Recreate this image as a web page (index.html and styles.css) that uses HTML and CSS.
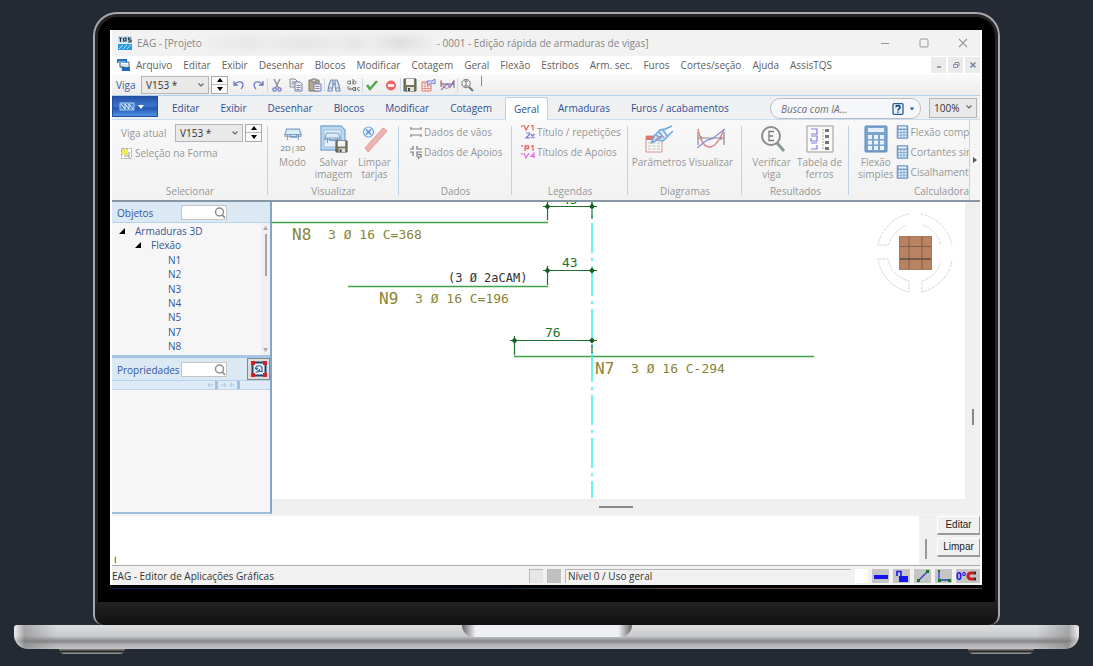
FILE: index.html
```html
<!DOCTYPE html>
<html lang="pt-BR">
<head>
<meta charset="utf-8">
<title>EAG - Edição rápida de armaduras de vigas</title>
<link rel="stylesheet" href="styles.css">
</head>
<body>
<svg class="defs" width="0" height="0" aria-hidden="true">
  <defs>
    <symbol id="chev" viewBox="0 0 8 8"><path d="M1.5 2.5 4 5 6.500 2.500" fill="none" stroke="#666" stroke-width="1.100"/></symbol>
    <symbol id="lens" viewBox="0 0 12 12"><circle cx="5.500" cy="5" r="4" fill="none" stroke="#8d8d8d" stroke-width="1.500"/><path d="M8.300 8 11 11" stroke="#8d8d8d" stroke-width="1.800"/></symbol>
    <symbol id="calc" viewBox="0 0 24 28"><rect x="1" y="1" width="22" height="26" rx="1" fill="#7ba3ce" stroke="#5b87ba"/><rect x="4" y="3" width="16" height="4" fill="#e4eefa"/><path d="M4 10h4v4H4zm6 0h4v4h-4zm6 0h4v4h-4zM4 15.500h4v4H4zm6 0h4v4h-4zm6 0h4v4h-4zM4 21h4v4H4zm6 0h4v4h-4zm6 0h4v4h-4z" fill="#e9f1fa"/></symbol>
    <symbol id="beam" viewBox="0 0 20 14"><path d="M3 1h14l2 6H1zM4 7v6M16 7v6M7 7v3h7V7M1 7h18v2H1z" fill="#dcebf8" stroke="#7c9ec4" stroke-width="1.200"/></symbol>
    <symbol id="disk" viewBox="0 0 14 14"><path d="M1 1h12v12H1z" fill="#77785f" stroke="#55564a"/><path d="M3 1h8v6H3z" fill="#f3f3f3"/><path d="M4 9h7v4H4z" fill="#ddd"/><path d="M5 10h2v3H5z" fill="#444"/></symbol>
  </defs>
</svg>
<div class="laptop">
  <div class="lid">
    <main class="screen">
      <header class="title">
        <svg class="logo" width="14" height="14" viewBox="0 0 14 14"><rect width="14" height="7" fill="#c7e3f2"/><path d="M1 2h3M2.500 2v4M6 2h2v3H5.500V2M13 2h-2.500v2H13v2h-3" fill="none" stroke="#23323e" stroke-width="1.200"/><rect y="8" width="14" height="6" fill="#2e9be6"/><path d="m1 13 4-4m0 4 4-4m0 4 4-4" stroke="#a7dcff"/></svg>
        <span>EAG - [Projeto</span><span class="smudge"></span><span>- 0001 - Edição rápida de armaduras de vigas]</span>
        <div class="winbtns">
          <button aria-label="Minimizar"><svg width="10" height="10"><path d="M1 5.500h8" stroke="#999"/></svg></button>
          <button aria-label="Maximizar"><svg width="10" height="10"><rect x="1" y="1" width="8" height="8" rx="1" fill="none" stroke="#999"/></svg></button>
          <button aria-label="Fechar"><svg width="10" height="10"><path d="m1 1 8 8m0-8-8 8" stroke="#999" stroke-width="1.100"/></svg></button>
        </div>
      </header>
      <nav class="menu">
        <svg class="logo" width="14" height="13" viewBox="0 0 14 13"><path d="M0 0h10v4H0z" fill="#2674bd"/><path d="M1 3h8" stroke="#b7def7"/><path d="M4 5h6l2 2v5H4z" fill="#d9e2ea"/><path d="M5 8h8v4H5z" fill="#1f6cb4"/><path d="M3 4v4h4" fill="none" stroke="#33506a"/><path d="M10 3h2v5" fill="none" stroke="#666"/></svg>
        <a href="#">Arquivo</a><a href="#">Editar</a><a href="#">Exibir</a><a href="#">Desenhar</a><a href="#">Blocos</a><a href="#">Modificar</a><a href="#">Cotagem</a><a href="#">Geral</a><a href="#">Flexão</a><a href="#">Estribos</a><a href="#">Arm. sec.</a><a href="#">Furos</a><a href="#">Cortes/seção</a><a href="#">Ajuda</a><a href="#">AssisTQS</a>
        <div class="mdi">
          <button aria-label="Minimizar desenho"><svg width="8" height="8"><path d="M2 6h4" stroke="#76879b" stroke-width="1.500"/></svg></button>
          <button aria-label="Restaurar desenho"><svg width="8" height="8"><path d="M1.500 3.500h4v3h-4zM3 3V1.500h4v3.500H6" fill="none" stroke="#8292a5"/></svg></button>
          <button aria-label="Fechar desenho"><svg width="8" height="8"><path d="m1.500 1.500 5 5m0-5-5 5" stroke="#76879b" stroke-width="1.600"/></svg></button>
        </div>
      </nav>
      <div class="tools">
        <label for="viga">Viga</label>
        <span class="combo"><select id="viga"><option>V153 *</option></select><svg width="8" height="8"><use href="#chev"/></svg></span>
        <span class="spin"><button aria-label="Próxima viga"><svg width="6" height="4"><path d="M0 4 3 0l3 4z"/></svg></button><button aria-label="Viga anterior"><svg width="6" height="4"><path d="m0 0 3 4 3-4z"/></svg></button></span>
        <div class="icons">
          <button aria-label="Desfazer"><svg width="14" height="14" viewBox="0 0 14 14"><path d="M2 3v4h4M2.500 6.500C5 3 11 3 11 7c0 2-1 3-2 4" fill="none" stroke="#6a79c4" stroke-width="1.300"/></svg></button>
          <button aria-label="Refazer"><svg width="14" height="14" viewBox="0 0 14 14"><path d="M12 3v4H8m3.500-.500C9 3 3 3 3 7c0 2 1 3 2 4" fill="none" stroke="#6a79c4" stroke-width="1.300"/></svg></button>
          <i></i>
          <button aria-label="Recortar"><svg width="14" height="14" viewBox="0 0 14 14"><path d="m4 1 4.500 9M10 1 5.500 10" stroke="#8a8f98" stroke-width="1.400"/><circle cx="4.500" cy="11.500" r="1.700" fill="none" stroke="#6b79c6" stroke-width="1.200"/><circle cx="9.500" cy="11.500" r="1.700" fill="none" stroke="#6b79c6" stroke-width="1.200"/></svg></button>
          <button aria-label="Copiar"><svg width="14" height="14" viewBox="0 0 14 14"><path d="M1 1h5l2 2v6H1z" fill="#eee" stroke="#8c8c98"/><path d="M6 4h5l2 2v7H6z" fill="#eef" stroke="#777fb4"/><path d="M2.500 4h4M2.500 6h3M7.500 7.500h4m-4 2h4m-4 2h3" stroke="#888"/></svg></button>
          <button aria-label="Colar"><svg width="14" height="14" viewBox="0 0 14 14"><path d="M1 2h10v11H1z" fill="#b1ab8b" stroke="#777768"/><path d="M4 1h4v3H4z" fill="#ddd" stroke="#777"/><path d="M6 6h7v7H6z" fill="#eef" stroke="#757cb6"/><path d="M7.500 8.500h4m-4 2h4" stroke="#888"/></svg></button>
          <i></i>
          <button aria-label="Localizar"><svg width="14" height="14" viewBox="0 0 14 14"><path d="M4 2h2v5l-1 6H1l1-6zM8 2h2l2 5 1 6H9L8 7zM5 6h4" fill="#dfeaf5" stroke="#7790b5" stroke-width="1.200"/><path d="M1 10h4m4 0h4" stroke="#7790b5"/></svg></button>
          <button aria-label="Substituir"><svg width="14" height="14" viewBox="0 0 14 14"><circle cx="3" cy="4.500" r="1.500" fill="none" stroke="#777"/><path d="M4.500 2.500v4M7 1v5.500" stroke="#777"/><circle cx="8.500" cy="4.500" r="1.500" fill="none" stroke="#777"/><path d="M2 8v3h3M4 9.500 5.500 11 4 12.500" fill="none" stroke="#777"/><circle cx="8" cy="11" r="1.500" fill="none" stroke="#666"/><path d="M9.500 9v4M13.500 9.700a1.500 1.500 0 1 0 0 2.600" fill="none" stroke="#666"/></svg></button>
          <i></i>
          <button aria-label="Confirmar"><svg width="14" height="14" viewBox="0 0 14 14"><path d="m2 7 3 4 7-8" fill="none" stroke="#52aa4c" stroke-width="2.600"/></svg></button>
          <button aria-label="Cancelar"><svg width="14" height="14" viewBox="0 0 14 14"><circle cx="7" cy="7.500" r="5" fill="#e8686a"/><path d="M4 7.500h6" stroke="#fff" stroke-width="2.400"/></svg></button>
          <i></i>
          <button aria-label="Salvar"><svg width="14" height="14"><use href="#disk"/></svg></button>
          <button aria-label="Parâmetros"><svg width="15" height="14" viewBox="0 0 15 14"><path d="M1 4h9v9H1z" fill="#fff" stroke="#db7773"/><path d="M1 5h9M1 8h9M1 10.500h9M4 5v8M7 5v8" stroke="#e5938f"/><path d="M6 3h5l3-2v5l-3-1-4 2z" fill="#dfe2fb" stroke="#777ac4"/></svg></button>
          <button aria-label="Diagrama"><svg width="15" height="14" viewBox="0 0 15 14"><path d="M1 6h13M1 3v6M14 3v7" stroke="#666"/><path d="M1 2c2 10 8 12 13 0" fill="none" stroke="#e77676" stroke-width="1.200"/><path d="m1 12 6-6 3 3 4-6" fill="none" stroke="#777dd0" stroke-width="1.200"/></svg></button>
          <i></i>
          <button aria-label="Ampliar"><svg width="14" height="14" viewBox="0 0 14 14"><circle cx="6" cy="5.500" r="4.200" fill="#f4f4f4" stroke="#777"/><path d="M6 3v5M4 3h4M4 8h4" stroke="#777"/><path d="m9 9 4 4" stroke="#667878" stroke-width="2"/></svg></button>
          <b></b>
        </div>
      </div>
      <nav class="tabs">
        <button class="app" aria-label="Aplicação"><svg width="38" height="10" viewBox="0 0 38 10"><path d="M4 1h14v7H4z" fill="#4c86cd" stroke="#b7d5f5"/><path d="m5 2 4 5V2l4 5V2l4 5" stroke="#e5f2ff" fill="none"/><path d="M22 3h6l-3 4z" fill="#fff"/></svg></button>
        <button>Editar</button><button>Exibir</button><button>Desenhar</button><button>Blocos</button><button>Modificar</button><button>Cotagem</button><button class="on">Geral</button><button>Armaduras</button><button>Furos / acabamentos</button>
        <div class="ask">
          <input type="text" aria-label="Busca" placeholder="Busca com IA...">
          <button aria-label="Ajuda"><svg width="26" height="12" viewBox="0 0 26 12"><rect x="1" y=".700" width="10" height="10.600" rx="1" fill="#e9f2fc" stroke="#2b5b98" stroke-width="1.300"/><path d="M4 4.300c0-2.200 4-2.200 4 0C8 6 6 5.700 6 7.500M6 8.500v1.300" fill="none" stroke="#184379" stroke-width="1.600"/><path d="M18 4.500h4l-2 3z" fill="#174ca0"/></svg></button>
        </div>
        <span class="combo zoom"><select aria-label="Zoom"><option>100%</option></select><svg width="8" height="8"><use href="#chev"/></svg></span>
      </nav>
      <section class="ribbon">
        <div class="group sel">
          <div class="body">
            <div class="line"><label for="atual">Viga atual</label>
              <span class="combo"><select id="atual"><option>V153 *</option></select><svg width="8" height="8"><use href="#chev"/></svg></span>
              <span class="spin"><button aria-label="Próxima"><svg width="6" height="4"><path d="M0 4 3 0l3 4z"/></svg></button><button aria-label="Anterior"><svg width="6" height="4"><path d="m0 0 3 4 3-4z"/></svg></button></span>
            </div>
            <button class="row"><svg width="11" height="11" viewBox="0 0 11 11"><path d="M.500.500h10v10H.500z" fill="#fff" stroke="#aaa" stroke-dasharray="3 1"/><path d="M1 1h6v6H1z" fill="#ece95e"/><path d="M8 4v6M3 8h5" stroke="#999"/></svg><span>Seleção na Forma</span></button>
          </div>
          <h2>Selecionar</h2>
        </div>
        <div class="group vis">
          <div class="body bigs">
            <button><svg width="28" height="28" viewBox="0 0 28 28"><use href="#beam" x="5" y="3" width="18" height="13"/><text x="14" y="26" class="mode">2D|3D</text></svg><span>Modo</span></button>
            <button><svg width="28" height="28" viewBox="0 0 28 28"><path d="M1 1h20l4 4v20H1z" fill="#bcd9ef" stroke="#7fadd5" stroke-width="1.400"/><path d="M4 5h17v17H4z" fill="#e7f2fb" stroke="#94bbdc"/><use href="#beam" x="4" y="7" width="17" height="12"/><use href="#disk" x="15" y="15" width="13" height="13"/></svg><span>Salvar<br>imagem</span></button>
            <button><svg width="28" height="28" viewBox="0 0 28 28"><path d="m4 23 18-20 4 3L7 27z" fill="#eab5b3" stroke="#e29a98"/><circle cx="7.500" cy="7" r="5" fill="#e5f2ff" stroke="#7ca9dc" stroke-width="1.200"/><path d="m5 4.500 5 5m0-5-5 5" stroke="#5c91cf" stroke-width="1.500"/></svg><span>Limpar<br>tarjas</span></button>
          </div>
          <h2>Visualizar</h2>
        </div>
        <div class="group dad">
          <div class="body">
            <button class="row"><svg width="14" height="12" viewBox="0 0 14 12"><path d="M1 3h12M1 9h12M2 1v2M12 1v2M2 9v2m10-2v2" stroke="#868686" stroke-width="1.200"/></svg><span>Dados de vãos</span></button>
            <button class="row"><svg width="14" height="14" viewBox="0 0 14 14"><path d="M1 4h3V1M8 1v3h5M1 7h3v4M8 12V7h5M9 9.500h3V12H9.500v2" fill="none" stroke="#777" stroke-width="1.200"/></svg><span>Dados de Apoios</span></button>
          </div>
          <h2>Dados</h2>
        </div>
        <div class="group leg">
          <div class="body">
            <button class="row"><svg width="14" height="14" viewBox="0 0 14 14"><path d="M1 0v2m2-2 2 5 3-5m2 1 2-1v5.500" fill="none" stroke="#e36a6a" stroke-width="1.300"/><path d="M5 8h3.500v1.500L5 13h4m1-4 3.500 4m0-4L10 13" fill="none" stroke="#7676db" stroke-width="1.200"/></svg><span>Título / repetições</span></button>
            <button class="row"><svg width="14" height="14" viewBox="0 0 14 14"><path d="M1 0v2m3 4V1h3.500v2.500H4m6-2 2-1V6" fill="none" stroke="#e36a6a" stroke-width="1.300"/><path d="M1 8v2m2-2 2 5 3-5m5 5V8l-3 3.500h4" fill="none" stroke="#e06be6" stroke-width="1.200"/></svg><span>Títulos de Apoios</span></button>
          </div>
          <h2>Legendas</h2>
        </div>
        <div class="group dia">
          <div class="body bigs">
            <button><svg width="28" height="28" viewBox="0 0 28 28"><path d="M1 11h16v16H1z" fill="#f7f7f7" stroke="#d19390"/><path d="M1 11h16v4H1z" fill="#dd7774"/><path d="M3 18h12M3 21h12M3 24h12" stroke="#bbb" stroke-dasharray="3 1.500"/><path d="m6 18 4-8 5-5 5-1 7-3M6 18l6-3 6 1 4-4 6-6" stroke="#70a8df" stroke-width="1.500" fill="#d3e6f7"/><path d="m11 10 5 4M14 7l5 6M18 5l4 6" stroke="#70a8df" stroke-width="1.500"/></svg><span>Parâmetros</span></button>
            <button><svg width="28" height="28" viewBox="0 0 28 28"><path d="M1 13h26M1 7v13M27 7v13M4 11v4m20-4v4" stroke="#888" stroke-width="1.200"/><path d="M1 4c5 24 17 24 26 0" fill="none" stroke="#e58584" stroke-width="1.400"/><path d="M0 23 10 15l5-1L28 4" fill="none" stroke="#858ce0" stroke-width="1.300"/></svg><span>Visualizar</span></button>
          </div>
          <h2>Diagramas</h2>
        </div>
        <div class="group res">
          <div class="body bigs">
            <button><svg width="28" height="28" viewBox="0 0 28 28"><circle cx="13" cy="11" r="9" fill="#f9f9f9" stroke="#8c8c8c" stroke-width="2"/><path d="M16 6.500h-5v9h5M11 11h4" fill="none" stroke="#777" stroke-width="1.300"/><path d="m19 18 7 8" stroke="#819c99" stroke-width="3"/></svg><span>Verificar<br>viga</span></button>
            <button><svg width="28" height="28" viewBox="0 0 28 28"><path d="M1 1h26v26H1z" fill="#fafafa" stroke="#999"/><path d="M5 4h6v5H5m0 2h6v5H5v-3m0 5h6m-6 6h6v-4" fill="none" stroke="#7e7edf" stroke-width="1.200"/><path d="M17 4v20" stroke="#aaa" stroke-dasharray="2 1"/><path d="M19 4h4v3h-4zm0 6h4v3h-4zm0 6h4v3h-4zm0 6h4v3h-4z" fill="#777"/></svg><span>Tabela de<br>ferros</span></button>
          </div>
          <h2>Resultados</h2>
        </div>
        <div class="group cal">
          <div class="body bigs">
            <button><svg width="28" height="28"><use href="#calc"/></svg><span>Flexão<br>simples</span></button>
            <div class="stack">
              <button class="row"><svg width="13" height="14"><use href="#calc"/></svg><span>Flexão composta</span></button>
              <button class="row"><svg width="13" height="14"><use href="#calc"/></svg><span>Cortantes simples</span></button>
              <button class="row"><svg width="13" height="14"><use href="#calc"/></svg><span>Cisalhamento</span></button>
            </div>
          </div>
          <h2>Calculadoras</h2>
        </div>
        <button class="more" aria-label="Mais"><svg width="4" height="6"><path d="m0 0 4 3-4 3z" fill="#555"/></svg></button>
      </section>
      <section class="work">
        <aside>
          <div class="phead"><label for="obj">Objetos</label><span class="find"><input id="obj" type="search"><svg width="12" height="12"><use href="#lens"/></svg></span></div>
          <div class="treebox">
            <ul class="tree">
              <li class="l0"><svg width="6" height="6"><path d="M6 0v6H0z"/></svg>Armaduras 3D</li>
              <li class="l1"><svg width="6" height="6"><path d="M6 0v6H0z"/></svg>Flexão</li>
              <li>N1</li><li>N2</li><li>N3</li><li>N4</li><li>N5</li><li>N7</li><li>N8</li>
            </ul>
            <div class="bar"><svg width="5" height="4"><path d="m0 4 2.500-4L5 4z" fill="#aaa"/></svg><i></i><svg width="5" height="4"><path d="m0 0 2.500 4L5 0z" fill="#aaa"/></svg></div>
          </div>
          <div class="phead prop"><label for="pro">Propriedades</label><span class="find"><input id="pro" type="search"><svg width="12" height="12"><use href="#lens"/></svg></span>
            <button aria-label="Selecionar elemento"><svg width="18" height="18" viewBox="0 0 18 18"><path d="M2.500 2.500h13v13h-13z" fill="#edf4fb" stroke="#25436d" stroke-width="2"/><path d="M5.500 8.500C6 5 11 5 12 7.500v4H9.500V9M5 8l1.500 1.500L8 8M5.500 12H8v-2" fill="none" stroke="#315d8f" stroke-width="1.200"/><path d="M1 1h4v4H1zm12 0h4v4h-4zM1 13h4v4H1zm12 0h4v4h-4z" fill="#d3202f"/></svg></button>
          </div>
          <div class="strip"><svg width="34" height="8" viewBox="0 0 34 8"><path d="M5 4H0m2-2L0 4l2 2M13 4h5m-2-2 2 2-2 2M27 4h-5m2-2-2 2 2 2" fill="none" stroke="#a9c6e3"/><path d="M7 0h3v8H7zm22 0h3v8h-3z" fill="#9fc1e3"/></svg></div>
        </aside>
        <div class="view">
          <div class="canvas">
            <svg class="cad" width="692" height="297">
              <g fill="none" stroke="#3ea24b" stroke-width="1.300"><path d="M0 20.500h276M76 84.500h200M242 154.500h300"/></g>
              <path d="M320 0v296" stroke="#40eeee" stroke-width="1.500" stroke-dasharray="30 5 3 5" stroke-dashoffset="22"/>
              <g stroke="#1f702b" stroke-width="1.200"><path d="M271 4.500h54M275.500 0v18M320 0v4M320 8v9M271 68.500h54M275.500 64v19M238 138.500h87M242.500 134v19M320 143v8"/></g>
              <g fill="#125e20"><path d="m275.500 1.500 3 3-3 3-3-3zM320 1.500l3 3-3 3-3-3zM275.500 65.500l3 3-3 3-3-3zM320 65.500l3 3-3 3-3-3zM242.500 135.500l3 3-3 3-3-3zM320 135.500l3 3-3 3-3-3z"/></g>
              <g class="rebar"><text class="n" x="20" y="38">N8</text><text x="56" y="37">3 Ø 16 C=368</text><text class="n" x="107" y="102">N9</text><text x="143" y="101">3 Ø 16 C=196</text><text class="n" x="323" y="172">N7</text><text x="359" y="171">3 Ø 16 C-294</text></g>
              <text class="cam" x="176" y="80">(3 Ø 2aCAM)</text>
              <g class="dim"><text x="290" y="2">45</text><text x="290" y="65">43</text><text x="273" y="135">76</text></g>
            </svg>
            <svg class="cube" width="78" height="82" viewBox="0 0 78 82"><g fill="none" stroke="#d5d5d5" stroke-dasharray="3 1"><path d="M33 2A40 40 0 0 0 2 33h10l3-6A30 30 0 0 1 31 13M45 2a40 40 0 0 1 31 31M47 13a30 30 0 0 1 18 20M2 47h10a28 28 0 0 0 21 22v11A40 40 0 0 1 2 47M76 49a40 40 0 0 1-30 31V69a28 28 0 0 0 19-20"/></g><path d="M23 24h33v34H23z" fill="#b98362"/><path d="M33 24v34M46 24v34M23 34.500h33" stroke="#7d5f4f"/><path d="M23 47h33" stroke="#5e4a40" stroke-width="1.500"/><path d="M23.500 24.500h32v33h-32z" fill="none" stroke="#a57a60"/></svg>
          </div>
          <div class="vbar"><i></i></div>
          <div class="hbar"><i></i></div>
        </div>
      </section>
      <section class="cmd">
        <textarea aria-label="Linha de comando">ı</textarea>
        <i></i>
        <div><button>Editar</button><button>Limpar</button></div>
      </section>
      <footer class="status">
        <span class="app-name">EAG - Editor de Aplicações Gráficas</span>
        <span class="box"></span><span class="box dark"></span><span class="level">Nível 0 / Uso geral</span>
        <button class="white" aria-label="Cor"></button>
        <button aria-label="Espessura"><svg width="16" height="14"><path d="M1 6h14v4H1z" fill="#1414f0"/></svg></button>
        <button aria-label="Trava"><svg width="16" height="14" viewBox="0 0 16 14"><path d="M3 7V2.500h4V7" fill="none" stroke="#1414f0" stroke-width="1.600"/><path d="M5 7h9v6H5z" fill="#1414f0"/></svg></button>
        <button aria-label="Linha"><svg width="16" height="14" viewBox="0 0 16 14"><path d="M4 11 12 3" stroke="#2b3ed0" stroke-width="1.300"/><path d="M2 10h3v3H2zm9-9h3v3h-3z" fill="#107a20"/></svg></button>
        <button aria-label="Ortogonal"><svg width="16" height="14" viewBox="0 0 16 14"><path d="M3 2v9h10" fill="none" stroke="#2b3ed0" stroke-width="1.300"/><path d="M2 1h2v2H2zm0 9h3v3H2zm10 0h3v3h-3z" fill="#107a20"/></svg></button>
        <button class="snap" aria-label="Ângulo e captura"><span>0°</span><svg width="11" height="12" viewBox="0 0 11 12"><path d="M8 3H5a3 3 0 0 0 0 6h3" fill="none" stroke="#d21818" stroke-width="3"/><path d="M8 1.500h2v3H8zm0 6h2v3H8z" fill="#333"/></svg></button>
      </footer>
    </main>
    <div class="glow"></div>
    <div class="chin"></div>
  </div>
  <div class="base"><div class="notch"></div></div>
  <div class="feet"><i></i><i></i></div>
</div>
</body>
</html>
```
FILE: styles.css
```css
* { box-sizing: border-box; }
body { margin: 0; background: #232a33; font: 10px/14px "Open Sans", "Noto Sans", sans-serif; color: #777; }
button { font: inherit; color: inherit; border: 0; background: none; padding: 0; margin: 0; }
svg { display: block; flex: none; }
.defs { position: absolute; }
a { color: inherit; text-decoration: none; }
h2 { margin: 0; font: inherit; text-align: center; }
label { white-space: nowrap; }

.laptop { min-height: 100vh; padding: 12px 14px; display: flex; flex-direction: column; }
.lid { flex: 1; margin: 0 79px; display: flex; flex-direction: column; background: #000; border: 2px solid #a9a6ac; border-bottom: 0; border-radius: 24px 24px 10px 10px; padding-top: 16px; overflow: hidden; box-shadow: inset 0 0 0 3px #242427; }
.screen { flex: 1; margin: 0 16px 0 15px; background: #f1f1f1; display: flex; flex-direction: column; border-right: 2px solid #fff; border-left: 2px solid #fff; overflow: hidden; }
.glow { height: 1px; margin: 3px 16px 13px 15px; background: linear-gradient(90deg, #0b1750, #0c254b 45%, #59404d 65%, #6c3c33 80%, #604050); }
.chin { height: 23px; background: linear-gradient(#232323, #101010); border-radius: 0 0 12px 12px; }
.base { height: 24px; background: linear-gradient(90deg, #ffffffa0, #77777780 1%, #ffffff00 4%, #ffffff00 96%, #77777780 99%, #ffffffa0), linear-gradient(#dcdddf, #cbccce 45%, #858688 68%, #adaeb0 80%, #c5c5c7); border-radius: 3px 3px 14px 14px; display: flex; justify-content: center; }
.notch { width: 170px; height: 12px; border-radius: 0 0 12px 12px; background: linear-gradient(90deg, #666, #eff0f3 8%, #eff0f3 92%, #666); }
.feet { height: 5px; margin: 0 45px; display: flex; justify-content: space-between; }
.feet i { width: 66px; height: 5px; background: linear-gradient(#8a8a8a, #2b2b2b 50%, #aaa); border-radius: 0 0 12px 12px; }

.title { height: 26px; display: flex; align-items: center; background: #f2f2f2; padding: 0 6px; color: #858585; white-space: nowrap; }
.logo { margin-right: 5px; }
.smudge { width: 231px; height: 14px; margin: 0 2px; background: linear-gradient(90deg, #f0f0f0, #e6e6e6 20%, #ececec 28%, #e5e5e5 42%, #ebebeb 58%, #e5e5e5 65%, #ededed 72%, #dedede 85%, #f0f0f0); filter: blur(3px); }
.winbtns { margin-left: auto; display: flex; gap: 29px; padding-right: 6px; }
.menu { height: 18px; display: flex; align-items: center; gap: 11px; background: #fff; padding-left: 5px; color: #606060; white-space: nowrap; }
.menu .logo { margin-right: -6px; }
.mdi { margin-left: auto; display: flex; gap: 2px; }
.mdi button { width: 15px; height: 16px; background: #ebebeb; display: grid; place-items: center; }
.tools { height: 22px; display: flex; align-items: center; background: linear-gradient(#fafafa, #ececec); border-bottom: 1px solid #afd0ee; padding-left: 4px; color: #3b5b9b; }
.tools label { width: 25px; }
.combo { position: relative; width: 68px; height: 18px; }
.combo select { appearance: none; width: 100%; height: 100%; border: 1px solid #b5b5b5; background: #e9e9e9; padding: 0 4px; font: inherit; color: #333; border-radius: 0; display: block; }
.combo svg { position: absolute; right: 4px; top: 5px; pointer-events: none; }
.spin { display: flex; flex-direction: column; width: 17px; height: 18px; border: 1px solid #aaa; margin-left: 2px; background: #fafafa; }
.spin button { flex: 1; display: grid; place-items: center; }
.spin button + button { border-top: 1px solid #bbb; }
.icons { display: flex; align-items: center; margin-left: 1px; }
.icons button { width: 19px; display: grid; place-items: center; }
.icons i { width: 1px; height: 14px; margin-right: -1px; background: #c7daea; }
.icons b { width: 1px; height: 10px; background: #888; margin: 0 0 8px 5px; }
.tabs { height: 24px; display: flex; align-items: stretch; background: #eff0f1; border-bottom: 1px solid #c9def1; color: #2f4f91; padding-right: 3px; }
.tabs > button { padding: 0 10px 0 9px; border: 1px solid transparent; border-bottom: 0; white-space: nowrap; }
.tabs > .app { width: 46px; height: 21px; margin-right: 4px; padding: 0 3px; background: linear-gradient(#2553a9, #3a75cc 45%, #2557b5 60%, #4e94e2); border: 1px solid #234fa0; display: grid; place-items: center; }
.tabs > .on { background: #fff; border-color: #b6d3ec; border-radius: 3px 3px 0 0; margin: 1px 0 -1px 2px; padding: 0 8px; }
.ask { width: 151px; height: 21px; margin: 2px 8px 0 auto; border: 1px solid #bdbdbd; border-radius: 10px; background: #f5f7fa; display: flex; align-items: center; padding: 0 2px 0 10px; }
.ask input { flex: 1; min-width: 0; border: 0; background: none; padding: 0; font: italic 10px/14px "Open Sans", sans-serif; }
.ask input::placeholder { color: #707070; opacity: 1; }
.zoom { width: 48px; height: 20px; margin-top: 2px; }

.ribbon { height: 82px; display: flex; background: linear-gradient(#f8f8f8, #f2f2f2); border-bottom: 2px solid #8796a4; color: #979797; }
.group { display: flex; flex-direction: column; flex: none; padding: 2px 0; position: relative; overflow: hidden; }
.group:not(.cal)::after { content: ""; position: absolute; right: 0; top: 6px; bottom: 5px; width: 1px; background: #b8d3ec; }
.group .body { flex: 1; }
.sel { width: 156px; } .vis { width: 131px; } .dad { width: 113px; } .leg { width: 116px; } .dia { width: 114px; } .res { width: 107px; }
.cal { flex: 1; min-width: 0; }
.cal h2 { padding-left: 65px; text-align: left; }
.line { display: flex; align-items: center; height: 21px; padding-left: 9px; }
.line label { width: 54px; }
.row { display: flex; align-items: center; gap: 3px; height: 20px; white-space: nowrap; }
.sel .row { padding-left: 9px; }
.dad .row { padding-left: 10px; gap: 1px; }
.leg .row { padding-left: 9px; gap: 2px; }
.bigs { display: flex; justify-content: center; text-align: center; line-height: 12px; }
.bigs > button { display: flex; flex-direction: column; align-items: center; gap: 3px; padding-top: 3px; white-space: nowrap; }
.vis .bigs > button { width: 41px; }
.dia .bigs > button { width: 52px; }
.res .bigs > button { width: 48px; }
.cal .bigs { justify-content: flex-start; padding-left: 4px; gap: 2px; }
.cal .bigs > button { width: 46px; }
.bigs .row { gap: 2px; }
.mode { font-size: 8px; fill: #777; text-anchor: middle; }
.more { width: 11px; background: #f5f5f5; border-left: 1px solid #bed6ee; display: grid; place-items: center; }

.work { flex: 1; display: flex; min-height: 0; }
aside { width: 160px; flex: none; background: #f6f6f6; border-right: 2px solid #84a5c9; border-bottom: 2px solid #9fbddd; color: #34569b; display: flex; flex-direction: column; }
.phead { height: 21px; background: #dbe9f5; border-bottom: 1px solid #b6d2ec; display: flex; align-items: center; padding-left: 5px; flex: none; }
.phead label { width: 64px; padding-top: 2px; }
.find { position: relative; width: 46px; height: 15px; }
.find input { width: 100%; height: 100%; display: block; border: 1px solid #c6c6c6; padding: 0; background: #fff; appearance: none; }
.find svg { position: absolute; right: 1px; top: 2px; }
.treebox { height: 135px; display: flex; border-bottom: 3px solid #a5c5e6; flex: none; }
.tree { flex: 1; list-style: none; margin: 0; padding: 1px 0 2px; display: flex; flex-direction: column; justify-content: space-between; }
.tree li { padding-left: 56px; display: flex; align-items: center; gap: 10px; }
.tree .l0 { padding-left: 7px; }
.tree .l1 { padding-left: 23px; }
.bar { width: 9px; background: #f0f0f0; display: flex; flex-direction: column; align-items: center; padding: 3px 0; }
.bar i { width: 2px; height: 42px; background: #a5a5a5; margin: 4px 0 auto; }
.prop { height: 23px; }
.prop button { margin-left: auto; width: 23px; height: 22px; border: 1px solid #888; background: #ddd; display: grid; place-items: center; }
.strip { height: 9px; background: #deebf6; border-bottom: 1px solid #bdd6ed; padding-left: 96px; }
.view { flex: 1; min-width: 0; display: grid; grid-template: 1fr 15px / 1fr 15px; background: #efefef; }
.canvas { background: #fff; position: relative; overflow: hidden; min-height: 0; }
.cad { position: absolute; left: 0; top: 0; }
.cad text { font: 13px "DejaVu Sans Mono", monospace; white-space: pre; }
.rebar { fill: #8a8436; }
.cad .n { font-size: 16px; }
.cad .cam { font-size: 12px; fill: #333; }
.dim { fill: #24702d; }
.cube { position: absolute; right: 11px; top: 10px; }
.vbar { display: grid; justify-items: center; align-items: end; padding-bottom: 74px; }
.vbar i { width: 2px; height: 16px; background: #888; }
.hbar { display: grid; place-items: center; padding-right: 6px; }
.hbar i { width: 34px; height: 2px; background: #888; }

.cmd { height: 52px; display: flex; background: #f0f0f0; border-top: 1px solid #f6f6f6; border-bottom: 1px solid #aaa; }
.cmd textarea { flex: 1; border: 0; resize: none; background: #fff; padding: 36px 2px 0; margin: 1px 0 0; font: inherit; color: #333; display: block; overflow: hidden; }
.cmd > i { width: 2px; height: 20px; margin: 24px 10px 0 6px; background: #999; }
.cmd div { width: 43px; display: flex; flex-direction: column; gap: 3px; padding-top: 1px; }
.cmd button { height: 19px; background: #f0f0f0; border: 1px solid #fff; border-right-color: #999; border-bottom: 2px solid #999; color: #222; font: 10px/14px "Liberation Sans", sans-serif; }
.status { height: 19px; display: flex; align-items: center; background: #f1f1f1; color: #333; gap: 4px; white-space: nowrap; }
.app-name { flex: 1; }
.box { width: 14px; height: 14px; background: #e6e6e6; border: 1px solid #bbb; border-right: 0; border-bottom: 0; }
.dark { background: #c0c0c0; }
.level { width: 286px; height: 14px; line-height: 13px; border: 1px solid #b5b5b5; border-right: 0; border-bottom: 0; padding-left: 2px; }
.status button { width: 17px; height: 14px; background: #c5c5c5; display: grid; place-items: center; overflow: hidden; }
.status .white { width: 13px; background: #fff; }
.status .snap { width: 24px; display: flex; align-items: center; color: #1414f0; font-weight: 700; }
.cal .bigs { padding-left: 9px; }
```
